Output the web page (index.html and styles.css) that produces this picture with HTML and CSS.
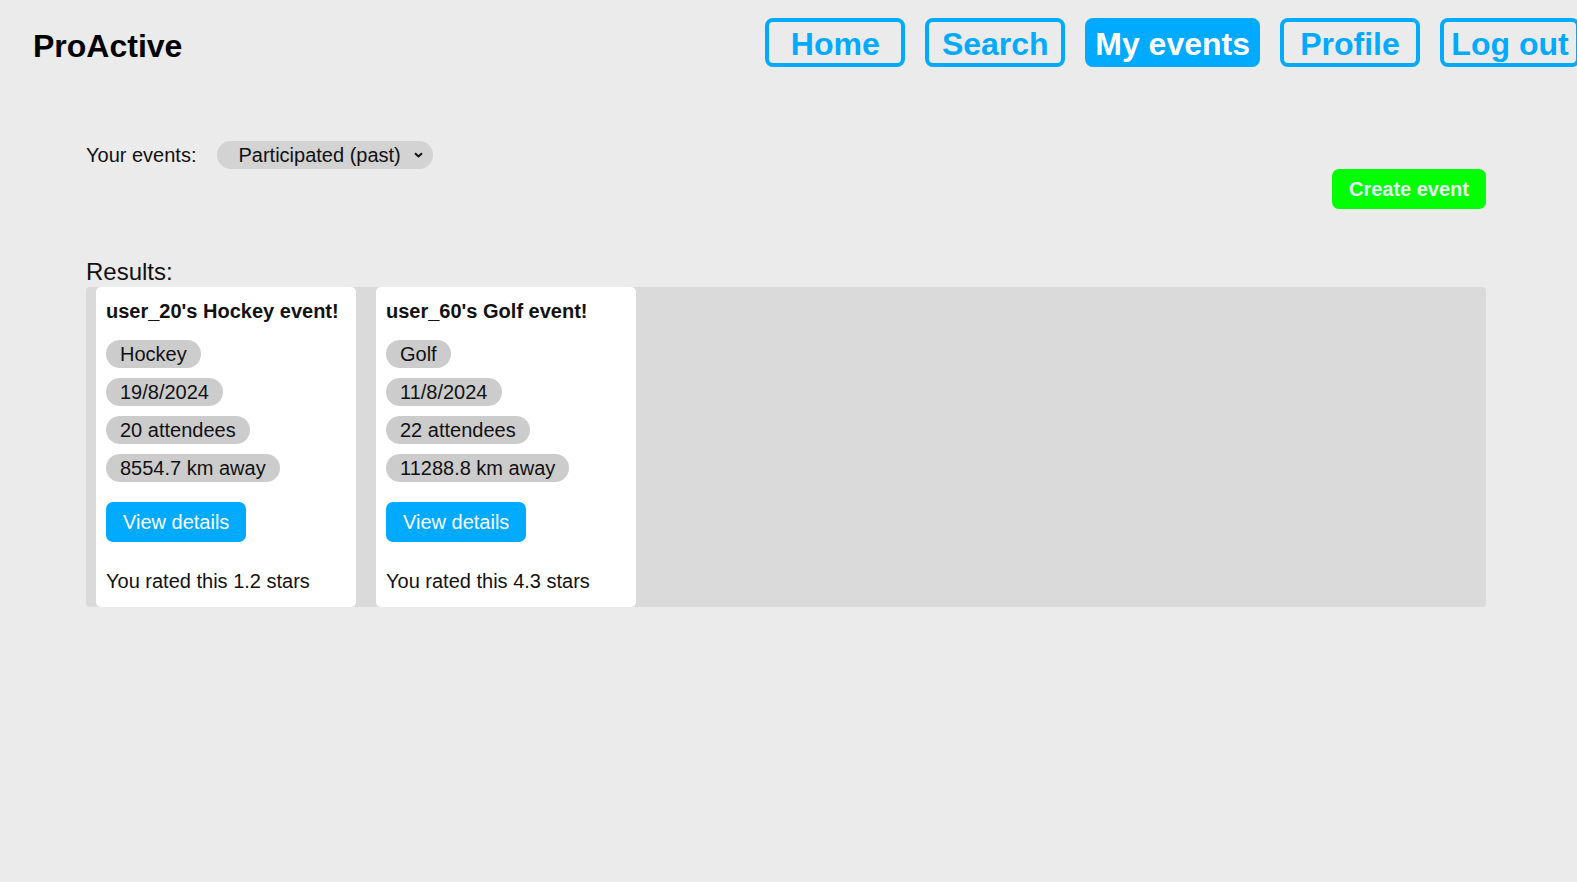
FILE: index.html
```html
<!DOCTYPE html>
<html lang="en">
<head>
<meta charset="utf-8">
<title>ProActive - My events</title>
<link rel="stylesheet" href="styles.css">
</head>
<body>
<header class="header">
  <div class="logo">ProActive</div>
  <nav class="nav">
    <button class="nav-btn">Home</button>
    <button class="nav-btn">Search</button>
    <button class="nav-btn nav-btn--active">My events</button>
    <button class="nav-btn">Profile</button>
    <button class="nav-btn">Log out</button>
  </nav>
</header>
<main class="main">
  <div class="filter-row">
    <span class="filter-label">Your events:</span>
    <div class="select-pill">
      <span>Participated (past)</span>
      <svg class="chevron" width="9" height="6" viewBox="0 0 9 6"><path d="M1 1.2 L4.5 4.5 L8 1.2" fill="none" stroke="#111" stroke-width="2"/></svg>
    </div>
  </div>
  <div class="actions">
    <button class="create-btn">Create event</button>
  </div>
  <div class="results-label">Results:</div>
  <section class="results">
    <article class="card">
      <h3 class="card-title">user_20's Hockey event!</h3>
      <div class="tags">
        <span class="tag">Hockey</span>
        <span class="tag">19/8/2024</span>
        <span class="tag">20 attendees</span>
        <span class="tag">8554.7 km away</span>
      </div>
      <button class="details-btn">View details</button>
      <p class="rating">You rated this 1.2 stars</p>
    </article>
    <article class="card">
      <h3 class="card-title">user_60's Golf event!</h3>
      <div class="tags">
        <span class="tag">Golf</span>
        <span class="tag">11/8/2024</span>
        <span class="tag">22 attendees</span>
        <span class="tag">11288.8 km away</span>
      </div>
      <button class="details-btn">View details</button>
      <p class="rating">You rated this 4.3 stars</p>
    </article>
  </section>
</main>
</body>
</html>
```

FILE: styles.css
```css
html, body {
  margin: 0;
  padding: 0;
}
body {
  background: #ebebeb;
  font-family: "Liberation Sans", Arial, sans-serif;
  color: #111;
  overflow-x: hidden;
}
button {
  font-family: inherit;
  cursor: pointer;
}

.header {
  display: flex;
  justify-content: space-between;
  align-items: flex-start;
  padding: 18px 0 0 33px;
}
.logo {
  margin-top: 10px;
  font-size: 32px;
  font-weight: bold;
  line-height: 37px;
  color: #000;
}
.nav {
  display: flex;
  gap: 20px;
  margin-right: -3px;
}
.nav-btn {
  box-sizing: border-box;
  height: 49px;
  min-width: 140px;
  padding: 4px 6px 0;
  border: 4px solid #00aaff;
  border-radius: 8px;
  background: transparent;
  color: #00aaff;
  font-size: 32px;
  font-weight: bold;
  line-height: 37px;
}
.nav-btn--active {
  background: #00aaff;
  color: #fff;
}

.main {
  width: 1400px;
  margin: 74px 0 0 86px;
}
.filter-row {
  display: flex;
  align-items: center;
  gap: 21px;
  height: 28px;
  font-size: 20px;
}
.select-pill {
  display: flex;
  align-items: center;
  gap: 13px;
  height: 28px;
  padding: 0 10px 0 21px;
  background: #d3d3d3;
  border-radius: 14px;
}
.chevron {
  display: block;
}
.actions {
  display: flex;
  justify-content: flex-end;
}
.create-btn {
  height: 40px;
  padding: 0 17px;
  border: none;
  border-radius: 7px;
  background: #00ff00;
  color: #e8e8f6;
  font-size: 20px;
  font-weight: bold;
}
.results-label {
  margin-top: 47px;
  font-size: 24px;
  line-height: 31px;
}
.results {
  display: flex;
  gap: 20px;
  padding: 0 10px;
  background: #dadada;
  border-radius: 4px;
}
.card {
  box-sizing: border-box;
  width: 260px;
  padding: 13px 10px 14px;
  background: #fff;
  border-radius: 5px;
  display: flex;
  flex-direction: column;
  align-items: flex-start;
}
.card-title {
  margin: 0 0 17px;
  font-size: 20px;
  line-height: 23px;
  font-weight: bold;
}
.tags {
  display: flex;
  flex-direction: column;
  align-items: flex-start;
  gap: 10px;
}
.tag {
  height: 28px;
  line-height: 28px;
  padding: 0 14px;
  background: #cccccc;
  border-radius: 14px;
  font-size: 20px;
}
.details-btn {
  margin-top: 20px;
  height: 40px;
  padding: 0 17px;
  border: none;
  border-radius: 7px;
  background: #00aaff;
  color: #fff;
  font-size: 20px;
}
.rating {
  margin: 28px 0 0;
  font-size: 20px;
  line-height: 23px;
}
```
